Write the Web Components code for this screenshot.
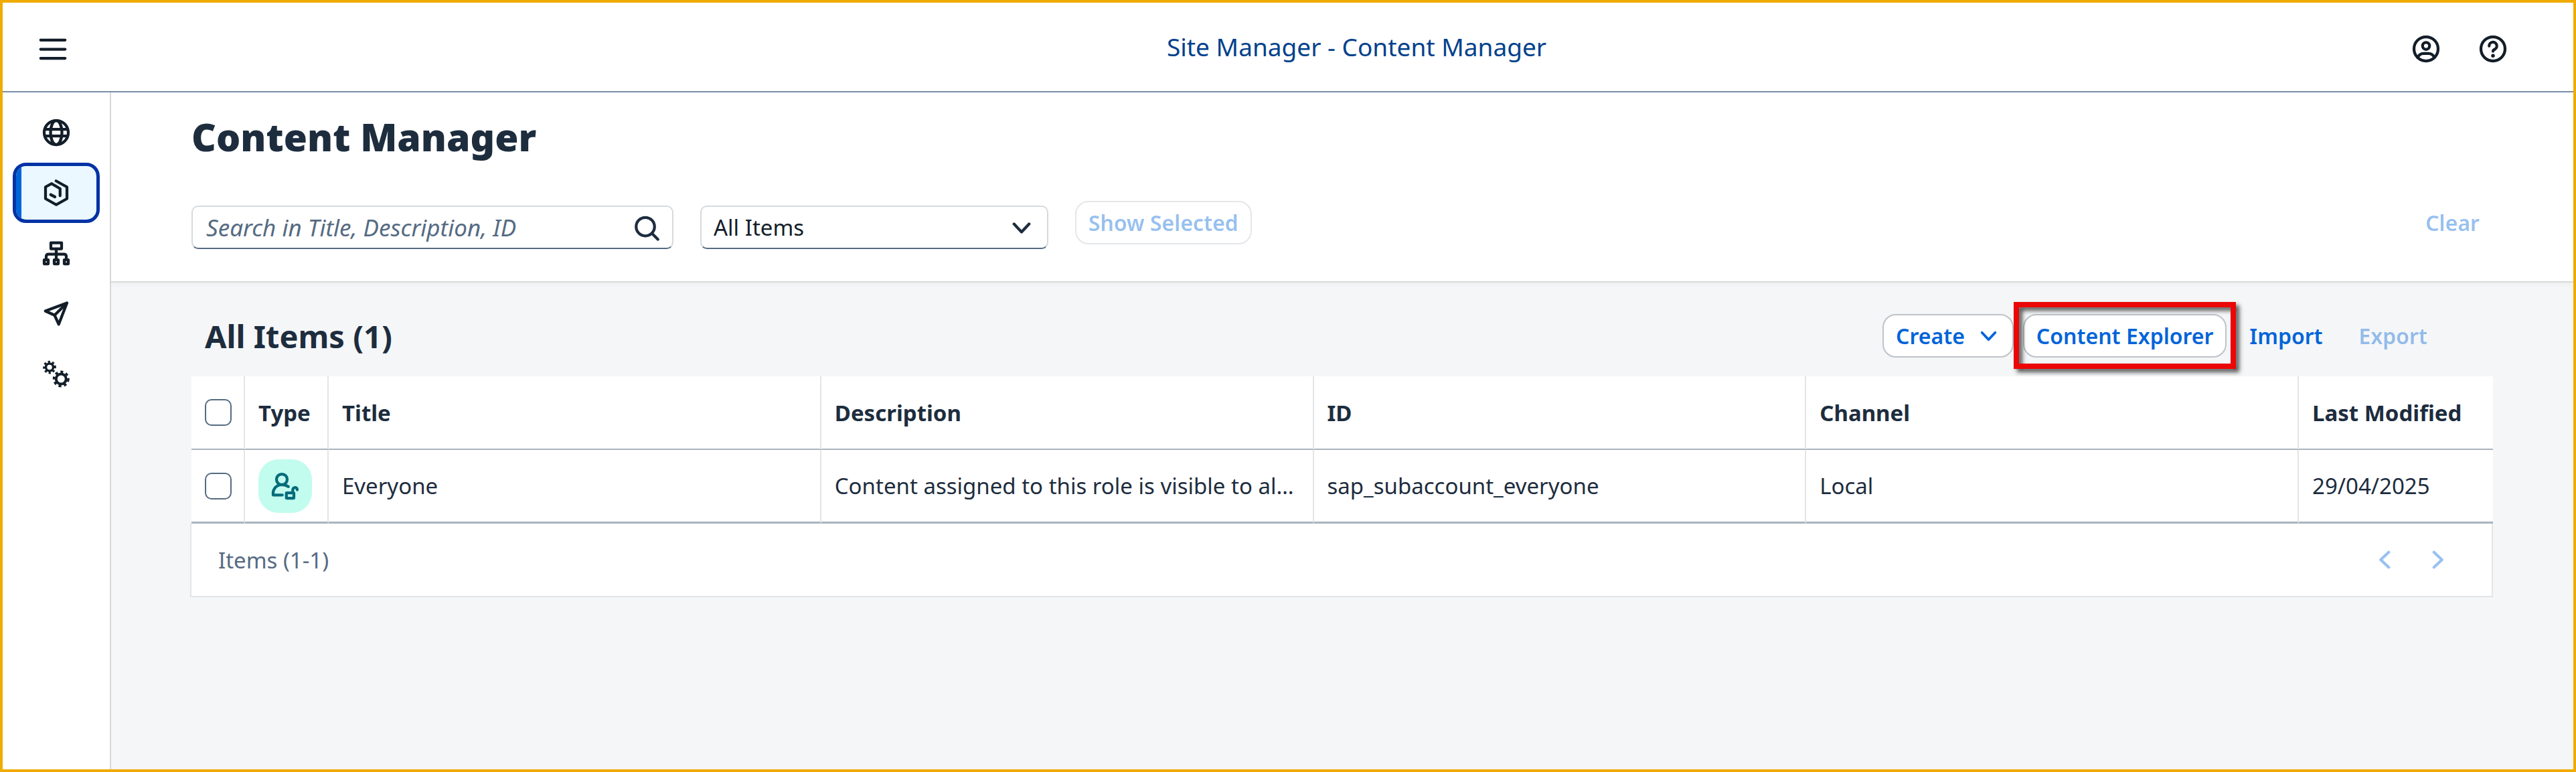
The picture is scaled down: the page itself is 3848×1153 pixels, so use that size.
<!DOCTYPE html>
<html lang="en">
<head>
<meta charset="utf-8">
<title>Site Manager - Content Manager</title>
<style>
  :root {
    --ink: #1d2d3e;
    --icon: #131e29;
    --muted: #556b82;
    --accent: #0064d9;
    --canvas: #f5f6f7;
    --line: #e5e5e5;
    --row-line: #a8b3bd;
  }
  body {
    margin: 0;
    font-family: "Noto Sans", "Open Sans", sans-serif;
    font-size: 33px;
    line-height: 45px;
    color: var(--ink);
  }
</style>
</head>
<body>
<app-shell>
  <shell-bar slot="header" heading="Site Manager - Content Manager"></shell-bar>
  <side-nav slot="nav">
    <nav-item icon="globe" label="Site Directory"></nav-item>
    <nav-item icon="package" label="Content Manager" selected></nav-item>
    <nav-item icon="org" label="Channel Manager"></nav-item>
    <nav-item icon="plane" label="Transport Manager"></nav-item>
    <nav-item icon="gears" label="Settings"></nav-item>
  </side-nav>
  <filter-header>Content Manager</filter-header>
  <items-panel>
    <span slot="title">All Items (1)</span>
    <ui-button slot="actions" kind="default" icon="down">Create</ui-button>
    <call-out slot="actions"><ui-button kind="default">Content Explorer</ui-button></call-out>
    <ui-button slot="actions" kind="plain">Import</ui-button>
    <ui-button slot="actions" kind="plain" disabled>Export</ui-button>
  </items-panel>
</app-shell>

<script>
const ICONS = {
  menu: '<path d="M.7 2.7h14.6M.7 8.2h14.6M.7 13.6h14.6"/>',
  globe: '<circle cx="8" cy="8" r="7.2"/><ellipse cx="8" cy="8" rx="3.4" ry="7.2"/><path d="M1.2 6h13.6M1.2 10h13.6"/>',
  package: '<path d="M7.9.9l6.5 3.6v7L8 15.1l-6.4-3.6v-7l3.6-2 5.1 3v4.2M4.7 9.1l2.5 1.3"/>',
  org: '<path d="M4.8 1.8h6.4v3.6H4.8zM8 5.6v6M2 12v-2q0-1.4 1.4-1.4h9.2Q14 8.6 14 10v2"/><path d="M.8 12h2.4v2.4H.8zM6.8 12h2.4v2.4H6.8zM12.8 12h2.4v2.4h-2.4z"/>',
  plane: '<path d="M14.4 1.8L1.5 6.6 7 9.1l2.5 5.4zM14.4 1.8L7 9.1"/>',
  gears: '<circle cx="4" cy="4.2" r="2.2" stroke-width="1.4"/><circle cx="4" cy="4.2" r="3.3" stroke-width="1.3" stroke-linecap="butt" pathLength="16" stroke-dasharray="1 1" stroke-dashoffset=".5"/><circle cx="10.9" cy="11.2" r="3" stroke-width="1.6"/><circle cx="10.9" cy="11.2" r="4.3" stroke-width="1.4" stroke-linecap="butt" pathLength="16" stroke-dasharray="1 1"/>',
  user: '<circle cx="8" cy="8" r="7.2"/><circle cx="8" cy="6.2" r="2.1"/><path d="M3 13.2C3.7 11.4 5 10.7 6.6 10.7h2.8c1.6 0 2.9.7 3.6 2.5"/>',
  help: '<circle cx="8" cy="8" r="7.2"/><path d="M5.7 6.3a2.3 2.3 0 1 1 3.5 1.9C8.4 8.6 8 8.8 8 9.4"/><circle cx="8" cy="12.1" r="1.1" fill="currentColor" stroke="none"/>',
  search: '<circle cx="7.2" cy="7.4" r="5.5"/><path d="M11.2 11.5l3.5 3.5"/>',
  down: '<path d="M3.5 5.8L8 10.6l4.5-4.8"/>',
  left: '<path d="M10.5 3.5L5.7 8l4.8 4.5"/>',
  right: '<path d="M5.5 3.5L10.3 8l-4.8 4.5"/>',
  role: '<circle cx="6" cy="4" r="3.2"/><path d="M9.9 8.3C8.8 7.5 7.5 7.1 6 7.1c-2.9 0-5.2 2.3-5.2 5.2v1h5.5"/><rect x="8.7" y="12" width="4.5" height="3.2" rx=".3"/><path d="M12.5 12v-1.5c0-2.2 2.7-2.2 2.7-.3"/>'
};
const icon = name =>
  `<svg class="icon" viewBox="0 0 16 16" fill="none" stroke="currentColor" stroke-width="1.7" stroke-linecap="round" stroke-linejoin="round" aria-hidden="true">${ICONS[name]}</svg>`;

const BASE = `
  *, *::before { box-sizing: border-box; }
  button, input, select { font: inherit; color: inherit; margin: 0; }
  .icon { display: block; flex: none; width: 40px; height: 40px; overflow: visible; }
`;

class Base extends HTMLElement {
  connectedCallback() {
    if (this.shadowRoot) return;
    this.attachShadow({ mode: 'open' }).innerHTML = `<style>${BASE}${this.css()}</style>${this.html()}`;
  }
}

customElements.define('app-shell', class extends Base {
  css() { return `
    :host { display: flex; flex-direction: column; box-sizing: border-box; min-height: 100vh; border: 4px solid #f0ab00; background: #fff; }
    .body { flex: 1; display: flex; }
    main { flex: 1; min-width: 0; display: flex; flex-direction: column; background: var(--canvas); }
  `; }
  html() { return `<slot name="header"></slot><div class="body"><slot name="nav"></slot><main><slot></slot></main></div>`; }
});

customElements.define('shell-bar', class extends Base {
  css() { return `
    :host { display: block; }
    header { display: grid; grid-template-columns: 1fr auto 1fr; align-items: center; height: 134px; padding: 0 70px 0 15px; border-bottom: 2px solid #788fa6; }
    button { display: grid; place-items: center; width: 100px; height: 90px; padding: 6px 0 0; border: 0; background: none; color: var(--icon); }
    .title { font-size: 37px; line-height: 50px; color: #00418c; padding-left: 260px; }
    .end { display: flex; justify-content: flex-end; }
    .start button { width: 120px; }
  `; }
  html() { return `<header>
    <div class="start"><button aria-label="Menu">${icon('menu')}</button></div>
    <div class="title">${this.getAttribute('heading')}</div>
    <div class="end"><button aria-label="User">${icon('user')}</button><button aria-label="Help">${icon('help')}</button></div>
  </header>`; }
});

customElements.define('side-nav', class extends Base {
  css() { return `
    :host { display: block; box-sizing: border-box; width: 162px; flex: none; border-right: 2px solid #d9d9d9; background: #fff; }
    nav { display: flex; flex-direction: column; padding: 15px; }
  `; }
  html() { return `<nav aria-label="Main"><slot></slot></nav>`; }
});

customElements.define('nav-item', class extends Base {
  css() { return `
    :host { display: block; }
    a { display: grid; place-items: center; height: 90px; border: 5px solid transparent; border-radius: 20px; color: var(--icon); }
    :host([selected]) a { border-color: #0032a5; background: linear-gradient(90deg, var(--accent) 8px, #ebf8ff 8px) padding-box; }
  `; }
  html() { return `<a href="#" aria-label="${this.getAttribute('label')}">${icon(this.getAttribute('icon'))}</a>`; }
});

customElements.define('ui-button', class extends Base {
  css() { return `
    :host { display: block; }
    button { display: flex; align-items: center; gap: 18px; height: 65px; padding: 0 18px; border: 2px solid transparent; border-radius: 20px; background: none; color: var(--accent); font-size: 32px; font-weight: 600; white-space: nowrap; }
    :host([kind=default]) button { background: #fff; border-color: #bcc3ca; }
    :host([disabled]) button { opacity: .4; }
    .icon { width: 35px; height: 35px; }
  `; }
  html() {
    const i = this.getAttribute('icon');
    return `<button ${this.hasAttribute('disabled') ? 'disabled' : ''}><slot></slot>${i ? icon(i) : ''}</button>`;
  }
});

/* Red marker frame that floats round its content */
customElements.define('call-out', class extends Base {
  css() { return `
    :host { display: block; position: relative; }
    .frame { position: absolute; inset: -18px -14px -17px; border: 8px solid #eb0707; filter: drop-shadow(5px 5px 3px rgba(0, 0, 0, .65)); pointer-events: none; }
  `; }
  html() { return `<slot></slot><div class="frame"></div>`; }
});

customElements.define('filter-header', class extends Base {
  css() { return `
    :host { display: block; position: relative; padding: 26px 120px 48px; background: #fff; border-bottom: 2px solid #d9d9d9; box-shadow: 0 4px 6px rgba(34, 53, 72, .03); }
    h1 { margin: 0 0 56px; font-size: 57px; line-height: 80px; font-weight: 900; }
    .row { display: flex; align-items: flex-start; gap: 40px; }
    .field { display: grid; align-items: center; margin-top: 7px; height: 65px; color: var(--ink); }
    .field > * { grid-area: 1 / 1; }
    .field .icon { justify-self: end; margin-right: 20px; pointer-events: none; }
    input, select { width: 100%; height: 65px; padding: 0 80px 0 20px; appearance: none; background: #fff; border: 2px solid #d5dae0; border-bottom-color: var(--muted); border-radius: 10px; outline: 0; }
    select { padding-left: 18px; color: var(--icon); }
    input::placeholder { color: var(--muted); opacity: 1; }
    input { font-size: 35px; font-style: italic; }
    .search { width: 720px; }
    .kind { width: 520px; }
    .clear { margin-left: auto; }
  `; }
  html() { return `
    <h1><slot></slot></h1>
    <div class="row">
      <label class="field search"><input type="text" aria-label="Search" placeholder="Search in Title, Description, ID">${icon('search')}</label>
      <label class="field kind"><select aria-label="Item type"><option>All Items</option></select>${icon('down')}</label>
      <ui-button kind="default" disabled>Show Selected</ui-button>
      <ui-button class="clear" kind="plain" disabled>Clear</ui-button>
    </div>`; }
});

customElements.define('items-panel', class extends Base {
  css() { return `
    :host { display: block; padding: 47px 120px; }
    .bar { display: flex; align-items: center; justify-content: space-between; height: 65px; margin-bottom: 28px; padding: 0 78px 0 20px; }
    h2 { margin: 0; font-size: 47px; line-height: 64px; font-weight: 700; }
    .actions { display: flex; gap: 14px; }
    table { width: 100%; table-layout: fixed; border-collapse: separate; border-spacing: 0; background: #fff; }
    th, td { height: 110px; padding: 0 20px; text-align: left; vertical-align: middle; border-right: 2px solid var(--line); border-bottom: 2px solid var(--row-line); white-space: nowrap; overflow: hidden; text-overflow: ellipsis; }
    td { border-bottom-width: 3px; }
    th:last-child, td:last-child { border-right: 0; }
    th:first-child, td:first-child { padding-right: 18px; }
    th { font-weight: 700; }
    .c-check { width: 80px; } .c-type { width: 125px; } .c-date { width: 290px; }
    input { display: block; width: 40px; height: 40px; appearance: none; background: #fff; border: 2px solid var(--muted); border-radius: 10px; }
    .avatar { display: grid; place-items: center; width: 80px; height: 80px; border-radius: 30px; background: #c2fcee; color: #046c7a; }
    .pager { display: flex; align-items: center; justify-content: space-between; height: 110px; margin-left: -2px; padding: 0 40px; background: #fff; border: 2px solid var(--line); border-top: 0; color: var(--muted); }
    .pages { display: flex; }
    .pages button { display: grid; place-items: center; width: 80px; height: 65px; padding: 0; border: 0; background: none; color: #99c1f0; }
  `; }
  html() { return `
    <div class="bar"><h2><slot name="title"></slot></h2><div class="actions"><slot name="actions"></slot></div></div>
    <table>
      <colgroup><col class="c-check"><col class="c-type"><col><col><col><col><col class="c-date"></colgroup>
      <thead><tr><th><input type="checkbox" aria-label="Select all"></th><th>Type</th><th>Title</th><th>Description</th><th>ID</th><th>Channel</th><th>Last Modified</th></tr></thead>
      <tbody><tr><td><input type="checkbox" aria-label="Select Everyone"></td><td><div class="avatar">${icon('role')}</div></td><td>Everyone</td><td>Content assigned to this role is visible to al…</td><td>sap_subaccount_everyone</td><td>Local</td><td>29/04/2025</td></tr></tbody>
    </table>
    <div class="pager"><span>Items (1-1)</span><div class="pages"><button disabled aria-label="Previous page">${icon('left')}</button><button disabled aria-label="Next page">${icon('right')}</button></div></div>`; }
});
</script>
</body>
</html>
